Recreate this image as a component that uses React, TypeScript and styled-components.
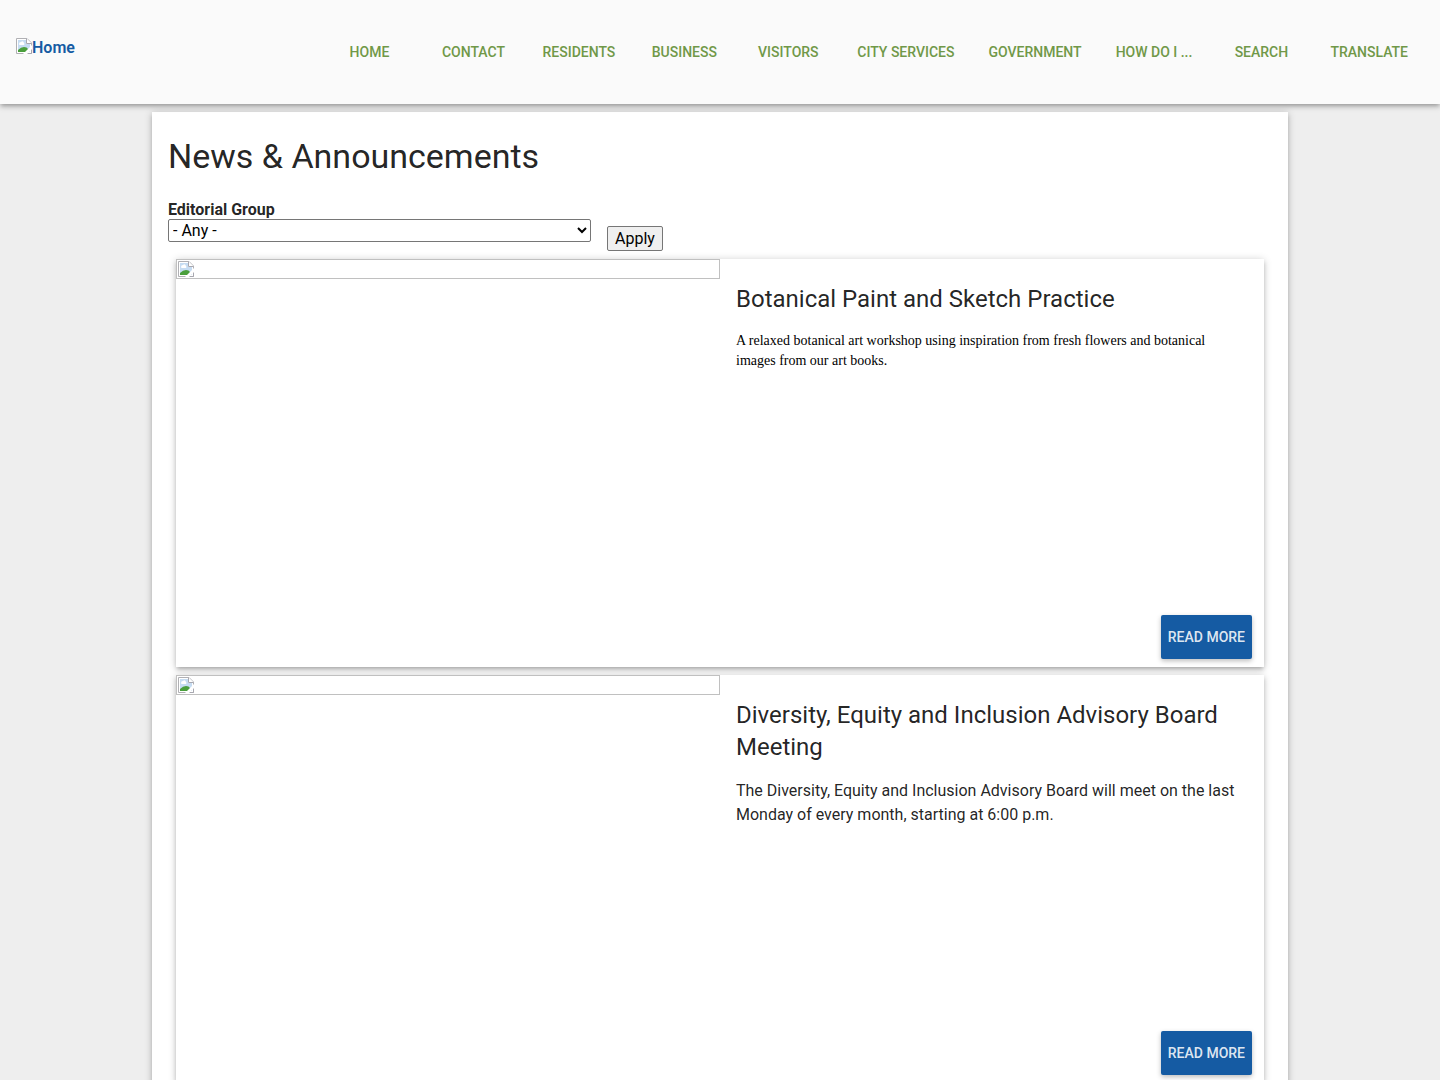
import React from "react";
import styled, { createGlobalStyle } from "styled-components";

const raised = `0 1px 8px rgba(0, 0, 0, 0.2), 0 3px 4px rgba(0, 0, 0, 0.14),
  0 3px 3px -2px rgba(0, 0, 0, 0.12)`;

const GlobalStyle = createGlobalStyle`
  * { box-sizing: border-box; }
  body {
    margin: 0;
    background: #eeeeee;
    color: rgba(0, 0, 0, 0.87);
    font-family: Roboto, "Liberation Sans", sans-serif;
    font-size: 16px;
    line-height: 24px;
  }
`;

const Page = styled.div`
  display: flex;
  flex-direction: column;
  height: 100vh;
  overflow: hidden;
`;

const Header = styled.header`
  position: relative;
  z-index: 1;
  flex: none;
  display: flex;
  align-items: flex-start;
  justify-content: space-between;
  padding: 32px 16px;
  background: #fafafa;
  box-shadow: ${raised};
`;

const HomeLink = styled.a`
  display: flex;
  align-items: flex-start;
  padding-top: 4px;
  color: #155ba3;
  font-weight: 600;
  text-decoration: none;

  svg {
    margin-top: 2px;
  }
`;

const Nav = styled.nav`
  display: flex;
  gap: 16px;
  padding: 0 7px;
`;

const NavLink = styled.a`
  min-width: 88px;
  padding: 0 9px;
  color: #709848;
  font-size: 14px;
  font-weight: 500;
  line-height: 40px;
  text-align: center;
  text-decoration: none;
  text-transform: uppercase;
  white-space: nowrap;
`;

const Scroller = styled.div`
  flex: 1;
  min-height: 0;
  overflow-y: auto;
  scrollbar-width: none;
`;

const Main = styled.main`
  width: calc(80% - 16px);
  margin: 8px auto;
  padding: 16px;
  background: #ffffff;
  box-shadow: ${raised};
`;

const PageTitle = styled.h1`
  margin: 8px 0 24px;
  font-size: 34px;
  font-weight: 400;
  line-height: 40px;
`;

const Filters = styled.form`
  display: flex;
  align-items: flex-end;
  gap: 16px;
`;

const Field = styled.div`
  display: flex;
  flex-direction: column;
  padding-bottom: 9px;
`;

const Label = styled.label`
  font-weight: 700;
  line-height: 19px;
`;

const Select = styled.select`
  width: 423px;
  height: 23px;
  color: #000000;
  background: #ffffff;
  border: 1px solid #767676;
  border-radius: 2px;
  font: inherit;
  line-height: 20px;
`;

const ApplyButton = styled.button`
  height: 25px;
  padding: 0 7px;
  color: #000000;
  background: #efefef;
  border: 1px solid #767676;
  border-radius: 2px;
  font: inherit;
  line-height: 20px;
`;

const Card = styled.article`
  display: flex;
  margin: 8px;
  background: #ffffff;
  box-shadow: ${raised};
`;

const Media = styled.div`
  flex: 0 0 50%;
  aspect-ratio: 4 / 3;
`;

const EmptyPicture = styled.div`
  display: flex;
  height: 20px;
  padding: 1px;
  border: 1px solid #c0c0c0;
`;

const CardBody = styled.div`
  flex: 1;
  min-width: 0;
  display: flex;
  flex-direction: column;
`;

const CardTitle = styled.h2`
  margin: 0;
  padding: 24px 16px 16px;
  font-size: 24px;
  font-weight: 400;
  line-height: 32px;
`;

const CardText = styled.p<{ $serif?: boolean }>`
  flex: 1;
  margin: 0;
  padding: 0 16px;
  color: ${(p) => (p.$serif ? "#000000" : "inherit")};
  font-family: ${(p) => (p.$serif ? '"Liberation Serif", serif' : "inherit")};
  font-size: ${(p) => (p.$serif ? 14 : 16)}px;
  line-height: ${(p) => (p.$serif ? 20 : 24)}px;
`;

const Actions = styled.div`
  display: flex;
  justify-content: flex-end;
  padding: 8px 12px;
`;

const ReadMore = styled.a`
  min-width: 88px;
  padding: 0 7px;
  color: rgba(255, 255, 255, 0.87);
  background: #155ba3;
  border-radius: 2px;
  box-shadow: 0 2px 5px rgba(0, 0, 0, 0.26);
  font-size: 14px;
  font-weight: 500;
  line-height: 44px;
  text-align: center;
  text-decoration: none;
  text-transform: uppercase;
`;

function MissingPicture() {
  return (
    <svg width="16" height="16" viewBox="0 0 16 16" aria-hidden="true">
      <path d="M0.5 15.5V0.5H11L15.5 5V15.5Z" fill="#fff" stroke="#b0b0b4" />
      <path d="M2 2H10V6H14V14H2Z" fill="#c6dcf2" />
      <path d="M3 6Q3 4 5 4Q7 2 8 5Q9 6 8 7H4Q3 7 3 6Z" fill="#fff" />
      <path d="M2 14V12Q5 9 8 9Q11 9 12 11V14Z" fill="#4a9f3c" />
      <path d="M10.5 0.5V5.5H15.5" fill="#fff" stroke="#a8a8b0" />
      <path d="M7 16L16 7V11L11 16Z" fill="#fff" />
      <path d="M12 15.5H15.5V12" fill="none" stroke="#a8a8b0" />
    </svg>
  );
}

const links = [
  "Home",
  "Contact",
  "Residents",
  "Business",
  "Visitors",
  "City Services",
  "Government",
  "How do I ...",
  "Search",
  "Translate",
];

const stories = [
  {
    title: "Botanical Paint and Sketch Practice",
    text: "A relaxed botanical art workshop using inspiration from fresh flowers and botanical images from our art books.",
    serif: true,
  },
  {
    title: "Diversity, Equity and Inclusion Advisory Board Meeting",
    text: "The Diversity, Equity and Inclusion Advisory Board will meet on the last Monday of every month, starting at 6:00 p.m.",
    serif: false,
  },
];

export default function App() {
  return (
    <Page>
      <GlobalStyle />
      <Header>
        <HomeLink href="#">
          <MissingPicture />
          Home
        </HomeLink>
        <Nav>
          {links.map((link) => (
            <NavLink key={link} href="#">
              {link}
            </NavLink>
          ))}
        </Nav>
      </Header>
      <Scroller>
        <Main>
          <PageTitle>News &amp; Announcements</PageTitle>
          <Filters onSubmit={(e) => e.preventDefault()}>
            <Field>
              <Label htmlFor="group">Editorial Group</Label>
              <Select id="group">
                <option>- Any -</option>
              </Select>
            </Field>
            <ApplyButton type="submit">Apply</ApplyButton>
          </Filters>
          {stories.map((story) => (
            <Card key={story.title}>
              <Media>
                <EmptyPicture>
                  <MissingPicture />
                </EmptyPicture>
              </Media>
              <CardBody>
                <CardTitle>{story.title}</CardTitle>
                <CardText $serif={story.serif}>{story.text}</CardText>
                <Actions>
                  <ReadMore href="#">Read more</ReadMore>
                </Actions>
              </CardBody>
            </Card>
          ))}
        </Main>
      </Scroller>
    </Page>
  );
}
